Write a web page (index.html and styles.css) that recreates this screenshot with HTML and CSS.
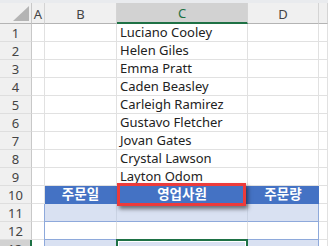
FILE: index.html
```html
<!DOCTYPE html>
<html lang="ko">
<head>
    <meta charset="UTF-8">
    <title>영업사원 목록</title>
    <link rel="stylesheet" href="styles.css">
</head>
<body>
    <div class="top-band"></div>
    <div class="sheet">
        <!-- column headers -->
        <div class="corner"><span class="corner-tri"></span></div>
        <div class="col-head">A</div>
        <div class="col-head">B</div>
        <div class="col-head selected">C</div>
        <div class="col-head">D</div>
        <div class="col-head"></div>

        <div class="row-head">1</div><div class="cell"></div><div class="cell"></div><div class="cell name">Luciano Cooley</div><div class="cell"></div><div class="cell"></div>
        <div class="row-head">2</div><div class="cell"></div><div class="cell"></div><div class="cell name">Helen Giles</div><div class="cell"></div><div class="cell"></div>
        <div class="row-head">3</div><div class="cell"></div><div class="cell"></div><div class="cell name">Emma Pratt</div><div class="cell"></div><div class="cell"></div>
        <div class="row-head">4</div><div class="cell"></div><div class="cell"></div><div class="cell name">Caden Beasley</div><div class="cell"></div><div class="cell"></div>
        <div class="row-head">5</div><div class="cell"></div><div class="cell"></div><div class="cell name">Carleigh Ramirez</div><div class="cell"></div><div class="cell"></div>
        <div class="row-head">6</div><div class="cell"></div><div class="cell"></div><div class="cell name">Gustavo Fletcher</div><div class="cell"></div><div class="cell"></div>
        <div class="row-head">7</div><div class="cell"></div><div class="cell"></div><div class="cell name">Jovan Gates</div><div class="cell"></div><div class="cell"></div>
        <div class="row-head">8</div><div class="cell"></div><div class="cell"></div><div class="cell name">Crystal Lawson</div><div class="cell"></div><div class="cell"></div>
        <div class="row-head">9</div><div class="cell"></div><div class="cell"></div><div class="cell name">Layton Odom</div><div class="cell"></div><div class="cell"></div>

        <!-- table header -->
        <div class="row-head">10</div><div class="cell"></div>
        <div class="cell tbl-head">주문일</div>
        <div class="cell tbl-head highlight">영업사원<span class="red-box"></span></div>
        <div class="cell tbl-head">주문량</div>
        <div class="cell"></div>

        <div class="row-head">11</div><div class="cell"></div><div class="cell band first"></div><div class="cell band"></div><div class="cell band last"></div><div class="cell"></div>
        <div class="row-head">12</div><div class="cell"></div><div class="cell plain first"></div><div class="cell plain"></div><div class="cell plain last"></div><div class="cell"></div>
        <div class="row-head active">13</div><div class="cell"></div><div class="cell band first"></div><div class="cell band active-cell"><span class="cursor"></span></div><div class="cell band last"></div><div class="cell"></div>
    </div>
</body>
</html>
```

FILE: styles.css
```css
body {
    margin: 0;
    background: #fff;
    font-family: 'Noto Sans', 'Noto Sans CJK KR', sans-serif;
    font-size: 13px;
    color: #222;
    overflow: hidden;
}
.top-band {
    height: 3px;
    background: #e9ebee;
}
.sheet {
    display: grid;
    grid-template-columns: 32px 13px 72px 131px 71px 9px;
    grid-template-rows: 21px repeat(13, 18px);
}
.corner,
.col-head,
.row-head {
    box-sizing: border-box;
    background: #f0f0f0;
    color: #444;
    display: flex;
    align-items: center;
    justify-content: center;
}
.corner {
    border-right: 1px solid #c8c8c8;
    border-bottom: 1px solid #b4b4b4;
    position: relative;
}
.corner-tri {
    position: absolute;
    right: 2px;
    bottom: 2px;
    width: 0;
    height: 0;
    border-left: 16px solid transparent;
    border-bottom: 15px solid #b4b4b4;
}
.col-head {
    border-right: 1px solid #d4d4d4;
    border-bottom: 1px solid #b4b4b4;
    padding-top: 1px;
}
.col-head.selected {
    background: #d2d2d2;
    color: #1e7145;
    border-bottom: 2px solid #1e7145;
}
.row-head {
    border-right: 1px solid #c8c8c8;
    border-bottom: 1px solid #dedede;
}
.row-head.active {
    background: #d2d2d2;
    border-right: 2px solid #1e7145;
}
.cell {
    box-sizing: border-box;
    border-right: 1px solid #e1e1e1;
    border-bottom: 1px solid #e1e1e1;
    position: relative;
    white-space: nowrap;
}
.name {
    padding-left: 3px;
    line-height: 17px;
}
.tbl-head {
    background: #4472c4;
    border-color: #4472c4;
    color: #fff;
    font-weight: bold;
    font-size: 13.5px;
    text-align: center;
    line-height: 17px;
}
.highlight {
    z-index: 2;
}
.red-box {
    position: absolute;
    left: 0;
    top: -3px;
    width: 129px;
    height: 23px;
    box-sizing: border-box;
    border: 3px solid #ec3b3b;
    box-shadow: 2px 3px 4px rgba(0, 0, 0, 0.5);
}
.band {
    background: #d9e1f2;
    border-bottom-color: #8ea9db;
    border-right-color: #c9d2e3;
}
.plain {
    border-bottom-color: #8ea9db;
}
.first {
    border-left: 1px solid #8ea9db;
    margin-left: -1px;
}
.last {
    border-right-color: #8ea9db;
}
.cursor {
    position: absolute;
    left: -1px;
    top: -1px;
    width: 132px;
    height: 20px;
    box-sizing: border-box;
    border: 2px solid #1e7145;
    box-shadow: inset 0 0 0 1px #fff;
}
```
